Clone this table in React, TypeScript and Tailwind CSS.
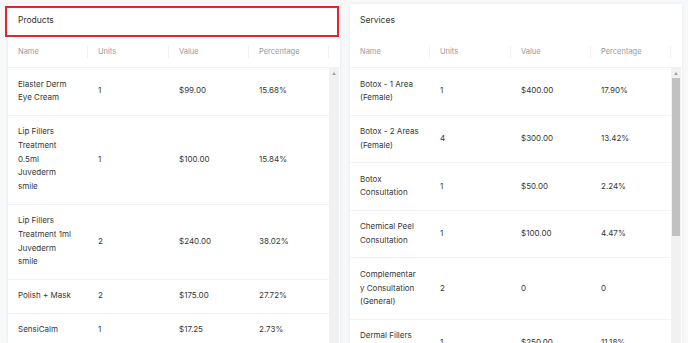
type Row = { name: string[]; units: string; value: string; pct: string };

const products: Row[] = [
  { name: ['Elaster Derm', 'Eye Cream'], units: '1', value: '$99.00', pct: '15.68%' },
  { name: ['Lip Fillers', 'Treatment', '0.5ml', 'Juvederm', 'smile'], units: '1', value: '$100.00', pct: '15.84%' },
  { name: ['Lip Fillers', 'Treatment 1ml', 'Juvederm', 'smile'], units: '2', value: '$240.00', pct: '38.02%' },
  { name: ['Polish + Mask'], units: '2', value: '$175.00', pct: '27.72%' },
  { name: ['SensiCalm'], units: '1', value: '$17.25', pct: '2.73%' },
];

const services: Row[] = [
  { name: ['Botox - 1 Area', '(Female)'], units: '1', value: '$400.00', pct: '17.90%' },
  { name: ['Botox - 2 Areas', '(Female)'], units: '4', value: '$300.00', pct: '13.42%' },
  { name: ['Botox', 'Consultation'], units: '1', value: '$50.00', pct: '2.24%' },
  { name: ['Chemical Peel', 'Consultation'], units: '1', value: '$100.00', pct: '4.47%' },
  { name: ['Complementar', 'y Consultation', '(General)'], units: '2', value: '0', pct: '0' },
  { name: ['Dermal Fillers', 'Treatment'], units: '1', value: '$250.00', pct: '11.18%' },
];

function HeadCell({ label, w }: { label: string; w: string }) {
  return (
    <div className={`flex ${w} items-center justify-between pl-[10px]`}>
      <span>{label}</span>
      <div className="h-[12px] w-px bg-[#efefef]" />
    </div>
  );
}

function Panel({ title, rows, highlight, thumb }: { title: string; rows: Row[]; highlight?: boolean; thumb?: boolean }) {
  return (
    <div className="relative flex w-[332px] flex-col bg-white shadow-[0_0_3px_rgba(0,0,0,0.08)]">
      {highlight && (
        <div className="absolute left-[-3px] top-[2px] h-[31px] w-[334px] border-2 border-[#e0262c]" />
      )}
      <div className="flex h-[33px] items-center px-[10px] text-[8.5px] text-[#333]">{title}</div>
      <div className="flex h-[31px] items-center border-b border-[#f2f2f2] text-[7.5px] text-[#999]">
        <HeadCell label="Name" w="w-[80px]" />
        <HeadCell label="Units" w="w-[81px]" />
        <HeadCell label="Value" w="w-[80px]" />
        <HeadCell label="Percentage" w="w-[80px]" />
      </div>
      <div className="flex min-h-0 flex-1">
        <div className="flex-1 text-[8px] leading-[13.8px] text-[#363636]">
          {rows.map((r, i) => (
            <div key={i} className="flex items-center border-b border-[#f3f3f3]">
              <div className="w-[80px] px-[10px] py-[9.5px]">
                {r.name.map((l, j) => (
                  <div key={j} className="whitespace-nowrap">{l}</div>
                ))}
              </div>
              <div className="w-[81px] pl-[10px]">{r.units}</div>
              <div className="w-[80px] pl-[10px]">{r.value}</div>
              <div className="w-[80px] pl-[10px]">{r.pct}</div>
            </div>
          ))}
        </div>
        <div className="mr-px flex w-[10px] flex-col items-center bg-[#f1f1f1]">
          <div className="flex h-[10px] items-center justify-center">
            <div className="h-0 w-0 border-x-[2.5px] border-b-[3px] border-x-transparent border-b-[#a6a6a6]" />
          </div>
          {thumb && <div className="h-[158px] w-[8px] bg-[#c1c1c1]" />}
        </div>
      </div>
    </div>
  );
}

export default function App() {
  return (
    <div
      className="flex h-[343px] w-[688px] gap-[10px] overflow-hidden bg-[#f7f8f9] pl-2 pt-1"
      style={{ fontFamily: 'Inter, "Noto Sans", sans-serif' }}
    >
      <Panel title="Products" rows={products} highlight />
      <Panel title="Services" rows={services} thumb />
    </div>
  );
}
